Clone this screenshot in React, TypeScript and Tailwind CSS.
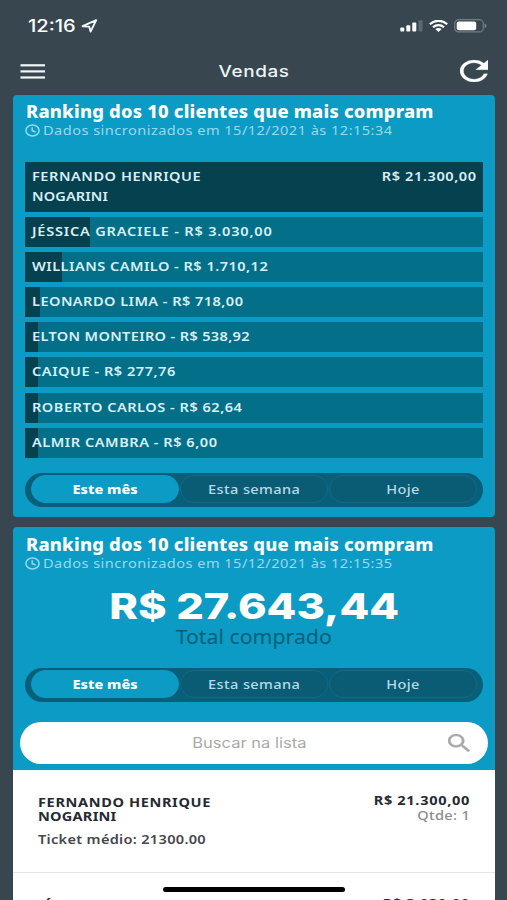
import { ReactNode } from "react";
import clsx from "clsx";

interface Client {
  name: string;
  total: string;
  bar: string;
  tracking: string;
}

const clients: Client[] = [
  { name: "JÉSSICA GRACIELE", total: "R$ 3.030,00", bar: "w-[65px]", tracking: "tracking-[0.7px]" },
  { name: "WILLIANS CAMILO", total: "R$ 1.710,12", bar: "w-[37px]", tracking: "tracking-[0.42px]" },
  { name: "LEONARDO LIMA", total: "R$ 718,00", bar: "w-[15px]", tracking: "tracking-[0.4px]" },
  { name: "ELTON MONTEIRO", total: "R$ 538,92", bar: "w-[13px]", tracking: "tracking-[0.3px]" },
  { name: "CAIQUE", total: "R$ 277,76", bar: "w-[13px]", tracking: "tracking-[0.47px]" },
  { name: "ROBERTO CARLOS", total: "R$ 62,64", bar: "w-[13px]", tracking: "tracking-[0.45px]" },
  { name: "ALMIR CAMBRA", total: "R$ 6,00", bar: "w-[13px]", tracking: "tracking-[0.47px]" },
];

const periods = ["Este mês", "Esta semana", "Hoje"];

// Widened text run
function Wide({ className, children }: { className?: string; children: ReactNode }) {
  return <span className={clsx("inline-block whitespace-nowrap", className)}>{children}</span>;
}

function StatusBar() {
  return (
    <div className="flex h-[50px] items-center justify-between pt-[2px] pr-[20px] pl-[28px] text-white">
      <div className="flex items-center">
        <Wide className="w-[53px] origin-left scale-x-[1.18] font-['Inter'] text-[17px] leading-5 font-medium">12:16</Wide>
        <svg className="h-[14px] w-[17px]" viewBox="0 0 17 14" fill="none">
          <path d="M1.6 7.2 15.2 1.2 9.6 12.6 8.2 7.6Z" stroke="#f1f7fa" strokeWidth="1.9" strokeLinejoin="round" />
        </svg>
      </div>
      <div className="flex items-center">
        <svg className="h-[12px] w-[23px]" viewBox="0 0 23 12" fill="#fff">
          <rect x="0.3" y="7.5" width="4" height="4" rx="1" />
          <rect x="6.3" y="5.3" width="4" height="6.2" rx="1" />
          <rect x="12.3" y="2.6" width="4" height="8.9" rx="1" />
          <rect x="18.5" y="0.2" width="4" height="11.3" rx="1" fill="#5b6b73" />
        </svg>
        <svg className="ml-[6px] h-[12px] w-[19px]" viewBox="0 0 19 12" fill="none" stroke="#fff" strokeWidth="2.2">
          <path d="M0.8 4.2C5.8-.3 13.2-.3 18.2 4.2" />
          <path d="M4 7.2C7.2 4.3 11.8 4.3 15 7.2" />
          <path d="M6.3 9 9.5 12 12.7 9C11 7.6 8 7.6 6.3 9Z" fill="#fff" stroke="none" />
        </svg>
        <svg className="ml-[6px] h-[14px] w-[33px]" viewBox="0 0 33 14">
          <rect x="0.7" y="0.7" width="28.6" height="12.2" rx="4" fill="none" stroke="#6f7e85" strokeWidth="1.2" />
          <rect x="2.7" y="2.5" width="19.5" height="8.8" rx="2" fill="#fff" />
          <path d="M30.7 4.6C33 5.6 33 8.2 30.7 9.2Z" fill="#7a888e" />
        </svg>
      </div>
    </div>
  );
}

function Header() {
  return (
    <header className="flex h-[45px] items-center justify-between pr-[19px] pb-[3px] pl-[20px]">
      <svg className="h-[15px] w-[28px]" viewBox="0 0 28 15" fill="#f0f6f9">
        <rect x="0.5" y="0.2" width="24.5" height="2.2" />
        <rect x="0.5" y="6.3" width="24.5" height="2.2" />
        <rect x="0.5" y="12.4" width="24.5" height="2.2" />
      </svg>
      <Wide className="scale-x-[1.18] font-['Inter'] text-[16px] leading-5 font-medium tracking-[0.5px] text-[#eef5f8]">Vendas</Wide>
      <svg className="h-[22px] w-[28px]" viewBox="4 4 16 16" preserveAspectRatio="none" fill="#fff" stroke="#fff" strokeWidth="0.15">
        <path d="M17.65 6.35C16.2 4.9 14.21 4 12 4c-4.42 0-7.99 3.58-7.99 8s3.57 8 7.99 8c3.73 0 6.84-2.55 7.73-6h-2.08c-.82 2.33-3.04 4-5.65 4-3.31 0-6-2.69-6-6s2.69-6 6-6c1.66 0 3.14.69 4.22 1.78L13 11h7V4l-2.35 2.35z" />
      </svg>
    </header>
  );
}

function CardTitle({ time }: { time: string }) {
  return (
    <div className="pl-[12px]">
      <h2 className="h-[21px] pl-[0.5px] leading-[21px]">
        <Wide className="origin-left scale-x-[1.08] text-[17px] leading-[21px] font-extrabold tracking-[0.18px] text-white">
          Ranking dos 10 clientes que mais compram
        </Wide>
      </h2>
      <div className="flex h-[17px] items-center text-[#9bd8ec]">
        <svg className="h-[13px] w-[15px] shrink-0" viewBox="0 0 15 13" fill="none" stroke="currentColor" strokeWidth="1.5">
          <ellipse cx="7.5" cy="6.5" rx="6.6" ry="5.5" />
          <path d="M7.2 3.2V6.8L10.6 8" />
        </svg>
        <Wide className="ml-[3px] origin-left scale-x-[1.12] text-[13px] leading-[17px] tracking-[0.42px]">
          Dados sincronizados em 15/12/2021 às {time}
        </Wide>
      </div>
    </div>
  );
}

function PeriodTabs() {
  return (
    <div className="mx-[12px] flex h-[34px] gap-[1px] rounded-full bg-[#075f79] px-[6px] pt-[2px] pb-[4px]">
      {periods.map((period, i) => (
        <button
          key={period}
          className={clsx(
            "flex-1 rounded-full border text-[13px] leading-4",
            i === 0
              ? "border-[#0b9bc4] bg-[#0b9bc4] font-extrabold text-white"
              : "border-[#146a82] bg-[#0a5c74] font-medium tracking-[0.35px] text-[#b5dbe7]"
          )}
        >
          <Wide className="scale-x-[1.12]">{period}</Wide>
        </button>
      ))}
    </div>
  );
}

function RankingCard() {
  return (
    <section className="h-[422px] rounded-[4px] bg-[#0b9bc4] pt-[6px]">
      <CardTitle time="12:15:34" />
      <div className="mx-[12px] mt-[23px] flex flex-col gap-[5.1px] text-[13px] font-semibold text-[#d9eff6]">
        <div className="flex h-[50px] justify-between bg-[#05414f] px-[6.5px] pt-[4px] leading-5">
          <div className="flex flex-col items-start">
            <Wide className="origin-left scale-x-[1.12] tracking-[0.48px]">FERNANDO HENRIQUE</Wide>
            <Wide className="origin-left scale-x-[1.12] tracking-[0.1px]">NOGARINI</Wide>
          </div>
          <Wide className="origin-right scale-x-[1.12] tracking-[0.52px]">R$ 21.300,00</Wide>
        </div>
        {clients.map((client) => (
          <div key={client.name} className="relative h-[30px] bg-[#046f88] pl-[6.5px] leading-[29px]">
            <div className={clsx("absolute inset-y-0 left-0 bg-[#05414f]", client.bar)} />
            <Wide className={clsx("relative origin-left scale-x-[1.12]", client.tracking)}>
              {client.name} - {client.total}
            </Wide>
          </div>
        ))}
      </div>
      <div className="mt-[15.3px]">
        <PeriodTabs />
      </div>
    </section>
  );
}

function TotalCard() {
  return (
    <section className="mt-[10px] rounded-t-[4px] bg-[#0b9bc4] pt-[7px]">
      <CardTitle time="12:15:35" />
      <div className="mt-[14px] flex flex-col items-center">
        <Wide className="scale-x-[1.205] font-['Inter'] text-[36px] leading-[40px] font-extrabold text-white">R$ 27.643,44</Wide>
        <Wide className="-mt-px scale-x-[1.12] text-[19px] leading-[24px] text-[#075f79]">Total comprado</Wide>
      </div>
      <div className="mt-[19px]">
        <PeriodTabs />
      </div>
      <div className="mx-[7px] mt-[20px] flex h-[42px] items-center rounded-full bg-white">
        <div className="flex-1 pr-[1px] pb-[3px] pl-[31px] text-center">
          <Wide className="scale-x-[1.18] font-['Inter'] text-[14px] text-[#aaa]">Buscar na lista</Wide>
        </div>
        <svg
          className="mr-[18px] h-[18px] w-[22px]"
          viewBox="3 3 17.5 17.5"
          preserveAspectRatio="none"
          fill="#a9a9a9"
          stroke="#a9a9a9"
          strokeWidth="0.3"
        >
          <path d="M15.5 14h-.79l-.28-.27C15.41 12.59 16 11.11 16 9.5 16 5.91 13.09 3 9.5 3S3 5.91 3 9.5 5.91 16 9.5 16c1.61 0 3.09-.59 4.23-1.57l.27.28v.79l5 4.99L20.49 19l-4.99-5zm-6 0C7.01 14 5 11.99 5 9.5S7.01 5 9.5 5 14 7.01 14 9.5 11.99 14 9.5 14z" />
        </svg>
      </div>
      <div className="mt-[6px] h-[200px] bg-white">
        <div className="flex h-[103px] justify-between border-b border-[#e5e5e5] pt-[24px] pr-[25px] pl-[25px] text-[13px] text-[#252a32]">
          <div className="flex flex-col items-start">
            <Wide className="mt-[1px] origin-left scale-x-[1.12] leading-[14px] font-bold tracking-[0.55px]">FERNANDO HENRIQUE</Wide>
            <Wide className="origin-left scale-x-[1.12] leading-[14px] font-bold tracking-[0.2px]">NOGARINI</Wide>
            <Wide className="mt-[7px] origin-left scale-x-[1.12] leading-[18px] font-semibold tracking-[0.27px] text-[#44474d]">
              Ticket médio: 21300.00
            </Wide>
          </div>
          <div className="flex flex-col items-end">
            <Wide className="-mt-px origin-right scale-x-[1.12] leading-[14px] font-bold tracking-[0.6px]">R$ 21.300,00</Wide>
            <Wide className="origin-right scale-x-[1.12] leading-[16px] font-medium tracking-[0.3px] text-[#8c8c8c]">Qtde: 1</Wide>
          </div>
        </div>
        <div className="flex justify-between px-[25px] pt-[23px] text-[13px] font-bold text-[#252a32]">
          <Wide className="mt-[2px] origin-left scale-x-[1.12] leading-[14px] tracking-[0.5px]">JÉSSICA GRACIELE</Wide>
          <Wide className="origin-right scale-x-[1.12] leading-[14px] tracking-[0.6px]">R$ 3.030,00</Wide>
        </div>
      </div>
    </section>
  );
}

export default function App() {
  return (
    <div className="relative h-[900px] w-[507px] overflow-hidden bg-[#38474f] font-['Noto_Sans',sans-serif]">
      <StatusBar />
      <Header />
      <main className="mr-[12px] ml-[13px]">
        <RankingCard />
        <TotalCard />
      </main>
      {/* home indicator */}
      <div className="absolute top-[887px] left-[163px] h-[5px] w-[182px] rounded-full bg-black" />
    </div>
  );
}
